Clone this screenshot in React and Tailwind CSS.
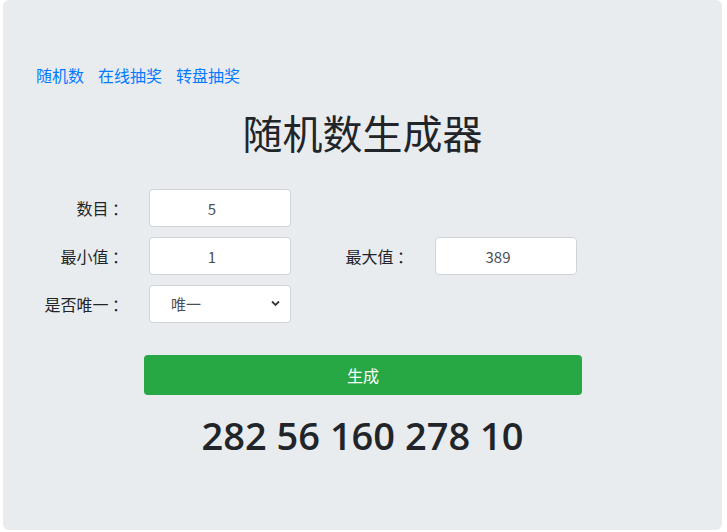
import { useState } from 'react';

const cjk = { fontFamily: '"Noto Sans CJK SC", "Noto Sans", sans-serif' };

function Field({ value, onChange }) {
  return (
    <input
      value={value}
      onChange={(e) => onChange(e.target.value)}
      className="w-[142px] h-[38px] bg-white border border-[#ced4da] rounded-[4px] pr-[16px] text-center text-[15px] text-[#495057] outline-none"
    />
  );
}

export default function App() {
  const [count, setCount] = useState('5');
  const [min, setMin] = useState('1');
  const [max, setMax] = useState('389');
  const [unique, setUnique] = useState('唯一');
  const [result, setResult] = useState([282, 56, 160, 278, 10]);

  const generate = () => {
    const n = parseInt(count) || 0;
    const lo = parseInt(min) || 0;
    const hi = parseInt(max) || 0;
    const out = [];
    while (out.length < n && (unique !== '唯一' || out.length <= hi - lo)) {
      const r = lo + Math.floor(Math.random() * (hi - lo + 1));
      if (unique === '唯一' && out.includes(r)) continue;
      out.push(r);
    }
    setResult(out);
  };

  return (
    <div className="bg-white w-[727px] h-[532px]" style={cjk}>
      <div className="ml-[3px] w-[719px] h-[530px] bg-[#e9ecef] rounded-md pt-[63px]">
        <nav className="flex gap-[14px] pl-[33px] text-[16px] leading-6 text-[#007bff]">
          <a href="#">随机数</a>
          <a href="#">在线抽奖</a>
          <a href="#">转盘抽奖</a>
        </nav>

        <h1 className="mt-[21px] text-center text-[40px] leading-[48px] text-[#212529]">随机数生成器</h1>

        <div className="mt-[33px] flex flex-col gap-[10px] text-[16px] text-[#212529]">
          <div className="flex items-center">
            <label className="w-[125px] text-right">数目 ：</label>
            <div className="ml-[21px]">
              <Field value={count} onChange={setCount} />
            </div>
          </div>
          <div className="flex items-center">
            <label className="w-[125px] text-right">最小值 ：</label>
            <div className="ml-[21px]">
              <Field value={min} onChange={setMin} />
            </div>
            <label className="w-[122px] text-right">最大值 ：</label>
            <div className="ml-[22px]">
              <Field value={max} onChange={setMax} />
            </div>
          </div>
          <div className="flex items-center">
            <label className="w-[125px] text-right">是否唯一 ：</label>
            <div className="ml-[21px] relative w-[142px] h-[38px]">
              <select
                value={unique}
                onChange={(e) => setUnique(e.target.value)}
                className="appearance-none w-full h-full bg-white border border-[#ced4da] rounded-[4px] pl-[21px] text-[15px] text-[#495057] outline-none"
              >
                <option>唯一</option>
                <option>可重复</option>
              </select>
              <svg className="absolute right-[11px] top-[15px] pointer-events-none" width="9" height="7" viewBox="0 0 9 7">
                <path d="M1 1.5 L4.5 5 L8 1.5" fill="none" stroke="#343a40" strokeWidth="1.8" />
              </svg>
            </div>
          </div>
        </div>

        <button
          onClick={generate}
          className="mt-[32px] ml-[141px] w-[438px] h-[40px] rounded-[4px] bg-[#28a745] text-white text-[16px]"
        >
          生成
        </button>

        <div
          className="mt-[16px] text-center text-[38px] leading-[48px] font-semibold text-[#212529]"
          style={{ fontFamily: '"Open Sans", sans-serif' }}
        >
          {result.join(' ')}
        </div>
      </div>
    </div>
  );
}
